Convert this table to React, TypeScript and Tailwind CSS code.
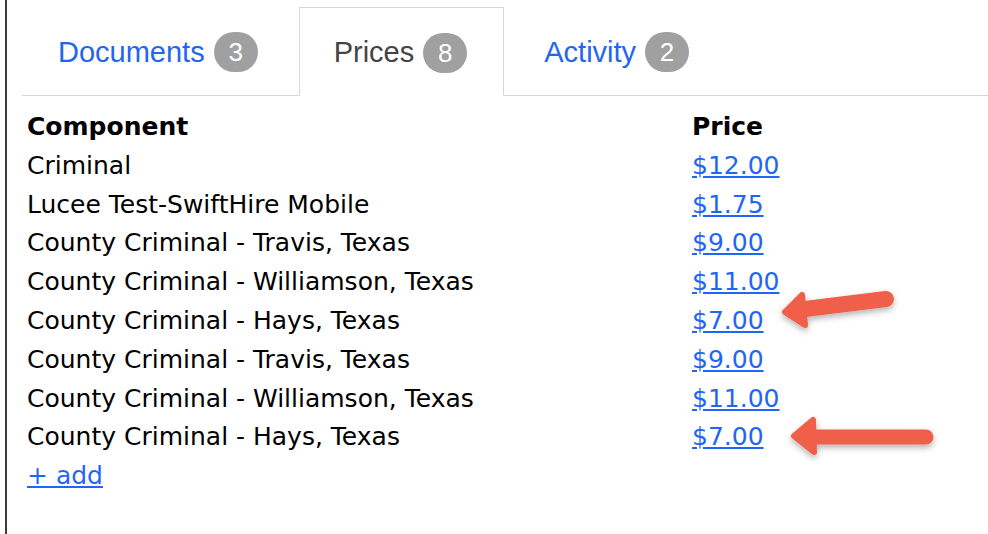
const tabs = [
  { label: "Documents", count: 3, active: false, pad: "pl-[36px] pr-[41px]" },
  { label: "Prices", count: 8, active: true, pad: "pl-[34px] pr-[36px]" },
  { label: "Activity", count: 2, active: false, pad: "pl-[40px] pr-[36px]" },
];

const rows = [
  { name: "Criminal", price: "$12.00" },
  { name: "Lucee Test-SwiftHire Mobile", price: "$1.75" },
  { name: "County Criminal - Travis, Texas", price: "$9.00" },
  { name: "County Criminal - Williamson, Texas", price: "$11.00" },
  { name: "County Criminal - Hays, Texas", price: "$7.00" },
  { name: "County Criminal - Travis, Texas", price: "$9.00" },
  { name: "County Criminal - Williamson, Texas", price: "$11.00" },
  { name: "County Criminal - Hays, Texas", price: "$7.00" },
];

const Arrows = () => (
  <svg
    className="absolute inset-0 pointer-events-none"
    width="988"
    height="534"
    viewBox="0 0 988 534"
  >
    <defs>
      <filter id="shadow" x="-20%" y="-50%" width="140%" height="200%">
        <feDropShadow dx="0" dy="3" stdDeviation="3" floodColor="#000" floodOpacity="0.3" />
      </filter>
    </defs>
    <g filter="url(#shadow)" fill="#f05f48" stroke="#f05f48" strokeLinejoin="round" strokeLinecap="round">
      <line x1="886" y1="299" x2="805" y2="309" strokeWidth="16" />
      <polygon points="785,312 802,295 805,325" strokeWidth="6" />
      <line x1="926" y1="437" x2="812" y2="437" strokeWidth="15" />
      <polygon points="794,436 813,420 814,452" strokeWidth="6" />
    </g>
  </svg>
);

export default function App() {
  return (
    <div className="relative w-[988px] h-[534px] bg-white overflow-hidden">
      <div className="ml-[5px] h-full border-l-2 border-[#3c3c3c] pl-[15px] pt-[7px]">
        <div className="flex items-end border-b border-[#d6d6d6] font-['Liberation_Sans',Arial,sans-serif]">
          {tabs.map((t) => (
            <div
              key={t.label}
              className={`flex h-[88px] items-center gap-[9px] pt-[2px] ${t.pad} ${
                t.active
                  ? "-mb-px h-[89px] border border-b-white border-[#d6d6d6] bg-white text-[#444]"
                  : "text-[#2266ee]"
              }`}
            >
              <span className="text-[29px] leading-none">{t.label}</span>
              <span className="flex h-[40px] w-[44px] items-center justify-center rounded-full bg-[#a0a0a0] text-[26px] leading-none text-white">
                {t.count}
              </span>
            </div>
          ))}
        </div>
        <table className="ml-[5px] mt-[12px] font-['DejaVu_Sans',Verdana,sans-serif] text-[25px] leading-[38.8px] text-black">
          <thead>
            <tr>
              <th className="w-[665px] p-0 text-left font-bold">Component</th>
              <th className="p-0 text-left font-bold">Price</th>
            </tr>
          </thead>
          <tbody>
            {rows.map((r, i) => (
              <tr key={i}>
                <td className="p-0">{r.name}</td>
                <td className="p-0">
                  <a href="#" className="text-[#1f66f5] underline">
                    {r.price}
                  </a>
                </td>
              </tr>
            ))}
            <tr>
              <td className="p-0">
                <a href="#" className="text-[#1f66f5] underline">
                  + add
                </a>
              </td>
              <td />
            </tr>
          </tbody>
        </table>
      </div>
      <Arrows />
    </div>
  );
}
